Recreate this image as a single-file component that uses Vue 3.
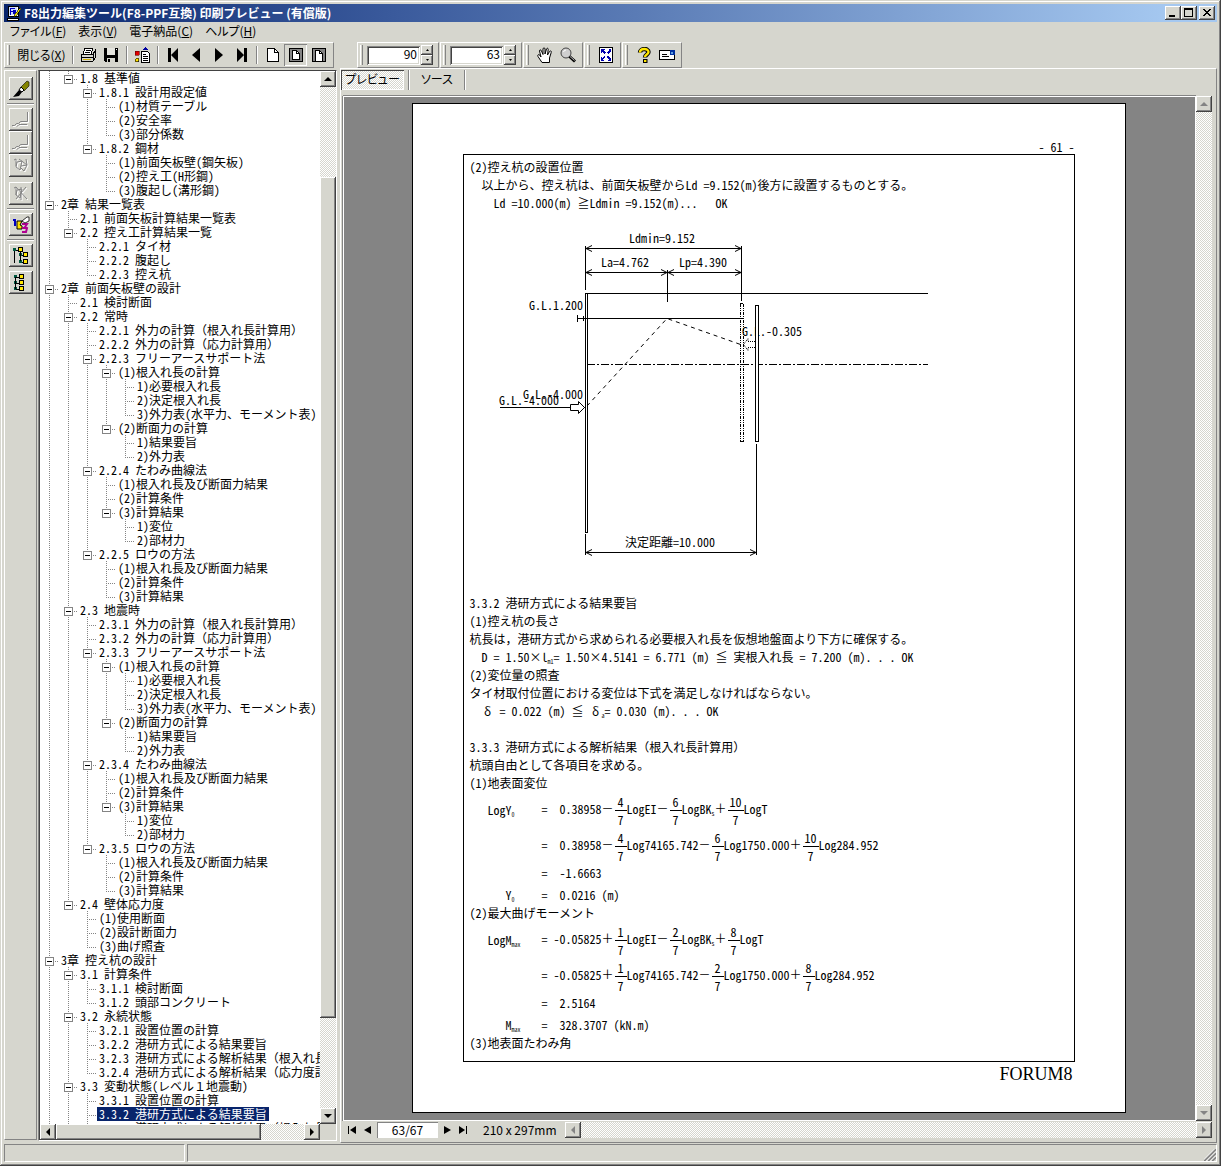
<script setup>
import { ref } from 'vue'

const menus = [
  ['ファイル', 'F'],
  ['表示', 'V'],
  ['電子納品', 'C'],
  ['ヘルプ', 'H'],
]

// Outline entries: [depth, label, expandable]
const outline = [
  [1, '1.8 基準値', 1],
  [2, '1.8.1 設計用設定値', 1],
  [3, '(1)材質テーブル'],
  [3, '(2)安全率'],
  [3, '(3)部分係数'],
  [2, '1.8.2 鋼材', 1],
  [3, '(1)前面矢板壁(鋼矢板)'],
  [3, '(2)控え工(H形鋼)'],
  [3, '(3)腹起し(溝形鋼)'],
  [0, '2章 結果一覧表', 1],
  [1, '2.1 前面矢板計算結果一覧表'],
  [1, '2.2 控え工計算結果一覧', 1],
  [2, '2.2.1 タイ材'],
  [2, '2.2.2 腹起し'],
  [2, '2.2.3 控え杭'],
  [0, '2章 前面矢板壁の設計', 1],
  [1, '2.1 検討断面'],
  [1, '2.2 常時', 1],
  [2, '2.2.1 外力の計算（根入れ長計算用）'],
  [2, '2.2.2 外力の計算（応力計算用）'],
  [2, '2.2.3 フリーアースサポート法', 1],
  [3, '(1)根入れ長の計算', 1],
  [4, '1)必要根入れ長'],
  [4, '2)決定根入れ長'],
  [4, '3)外力表(水平力、モーメント表)'],
  [3, '(2)断面力の計算', 1],
  [4, '1)結果要旨'],
  [4, '2)外力表'],
  [2, '2.2.4 たわみ曲線法', 1],
  [3, '(1)根入れ長及び断面力結果'],
  [3, '(2)計算条件'],
  [3, '(3)計算結果', 1],
  [4, '1)変位'],
  [4, '2)部材力'],
  [2, '2.2.5 ロウの方法', 1],
  [3, '(1)根入れ長及び断面力結果'],
  [3, '(2)計算条件'],
  [3, '(3)計算結果'],
  [1, '2.3 地震時', 1],
  [2, '2.3.1 外力の計算（根入れ長計算用）'],
  [2, '2.3.2 外力の計算（応力計算用）'],
  [2, '2.3.3 フリーアースサポート法', 1],
  [3, '(1)根入れ長の計算', 1],
  [4, '1)必要根入れ長'],
  [4, '2)決定根入れ長'],
  [4, '3)外力表(水平力、モーメント表)'],
  [3, '(2)断面力の計算', 1],
  [4, '1)結果要旨'],
  [4, '2)外力表'],
  [2, '2.3.4 たわみ曲線法', 1],
  [3, '(1)根入れ長及び断面力結果'],
  [3, '(2)計算条件'],
  [3, '(3)計算結果', 1],
  [4, '1)変位'],
  [4, '2)部材力'],
  [2, '2.3.5 ロウの方法', 1],
  [3, '(1)根入れ長及び断面力結果'],
  [3, '(2)計算条件'],
  [3, '(3)計算結果'],
  [1, '2.4 壁体応力度', 1],
  [2, '(1)使用断面'],
  [2, '(2)設計断面力'],
  [2, '(3)曲げ照査'],
  [0, '3章 控え杭の設計', 1],
  [1, '3.1 計算条件', 1],
  [2, '3.1.1 検討断面'],
  [2, '3.1.2 頭部コンクリート'],
  [1, '3.2 永続状態', 1],
  [2, '3.2.1 設置位置の計算'],
  [2, '3.2.2 港研方式による結果要旨'],
  [2, '3.2.3 港研方式による解析結果（根入れ長計算用）'],
  [2, '3.2.4 港研方式による解析結果（応力度計算用）'],
  [1, '3.3 変動状態(レベル１地震動)', 1],
  [2, '3.3.1 設置位置の計算'],
  [2, '3.3.2 港研方式による結果要旨'],
  [2, '3.3.3 港研方式による解析結果（根入れ長計算用）'],
]

// The branch line of a level runs on until a shallower entry closes it.
function continues(index, level) {
  for (let i = index + 1; i < outline.length; i++) {
    if (outline[i][0] === level) return true
    if (outline[i][0] < level) return false
  }
  return true
}

// Markup: {4/7} is a fraction, _ab; a subscript; full-width signs keep a whole cell.
const FULL = '×δ－＋≦≧（），１'
function parse(text) {
  return text
    .split(/(_\w+;|\{\d+\/\d+\}|[×δ－＋≦≧（），１])/)
    .filter(Boolean)
    .map((t) => {
      if (t[0] === '_') return { kind: 'sub', text: t.slice(1, -1) }
      if (t[0] === '{') {
        const [top, bottom] = t.slice(1, -1).split('/')
        return { kind: 'frac', top, bottom, wide: top.length > 1 }
      }
      if (FULL.includes(t)) return { kind: 'full', text: t }
      return { kind: 'text', text: t }
    })
}

const rows = outline.map(([depth, label, branch], i) => ({
  parts: parse(label),
  branch,
  guides: Array.from({ length: depth }, (_, level) => continues(i, level)),
  more: continues(i, depth),
}))

const selected = ref(74)
const zoom = ref('90')
const page = ref('63')
const pageLabel = ref('63/67')

const intro = [
  { text: '(2)控え杭の設置位置' },
  { text: '以上から、控え杭は、前面矢板壁からLd =9.152(m)後方に設置するものとする。', cls: 'in1' },
  { text: 'Ld =10.000(m) ≧Ldmin =9.152(m)...   OK', cls: 'in2' },
].map((l) => ({ ...l, parts: parse(l.text) }))

const body = [
  { text: '3.3.2 港研方式による結果要旨' },
  { text: '(1)控え杭の長さ' },
  { text: '杭長は，港研方式から求められる必要根入れ長を仮想地盤面より下方に確保する。' },
  { text: 'D = 1.50×l_m1;= 1.50×4.5141 = 6.771 (m) ≦ 実根入れ長 = 7.200 (m). . . OK', cls: 'in1' },
  { text: '(2)変位量の照査' },
  { text: 'タイ材取付位置における変位は下式を満足しなければならない。' },
  { text: 'δ = 0.022 (m) ≦ δ_a;= 0.030 (m). . . OK', cls: 'in1' },
  { text: '' },
  { text: '3.3.3 港研方式による解析結果（根入れ長計算用）' },
  { text: '杭頭自由として各項目を求める。' },
  { text: '(1)地表面変位' },
  { lhs: 'LogY_0;', text: '=  0.38958－{4/7}LogEI－{6/7}LogBK_s;＋{10/7}LogT', cls: 'tall' },
  { lhs: '', text: '=  0.38958－{4/7}Log74165.742－{6/7}Log1750.000＋{10/7}Log284.952', cls: 'tall' },
  { lhs: '', text: '=  -1.6663' },
  { lhs: 'Y_0;', text: '=  0.0216 (m)', cls: 'result' },
  { text: '(2)最大曲げモーメント' },
  { lhs: 'LogM_max;', text: '= -0.05825＋{1/7}LogEI－{2/7}LogBK_s;＋{8/7}LogT', cls: 'tall' },
  { lhs: '', text: '= -0.05825＋{1/7}Log74165.742－{2/7}Log1750.000＋{8/7}Log284.952', cls: 'tall' },
  { lhs: '', text: '=  2.5164' },
  { lhs: 'M_max;', text: '=  328.3707 (kN.m)', cls: 'result' },
  { text: '(3)地表面たわみ角' },
].map((l) => ({ ...l, parts: parse(l.text), left: l.lhs === undefined ? null : parse(l.lhs) }))
</script>

<template>
  <div class="window">
    <header class="titlebar">
      <svg class="ico" viewBox="0 0 16 16" shape-rendering="crispEdges" aria-hidden="true">
        <path d="M2 1h10v10H2z" fill="#fff" stroke="#000" />
        <path d="M3 2h8v8H3z" fill="#cfe0ff" />
        <path d="M4 3h5v1H5v2h3v1H5v3H4zM7 5h3v4H7z" fill="#0000c0" />
        <path d="M1 13h11v2H1z" fill="#fff" stroke="#000" />
        <path d="M14 3l1 1-5 7-2 1 1-3z" fill="#f0e000" stroke="#000" stroke-width=".6" />
      </svg>
      <h1>F8出力編集ツール(F8-PPF互換) 印刷プレビュー (有償版)</h1>
      <div class="caption">
        <button class="btn3d cap" aria-label="最小化">
          <svg viewBox="0 0 12 10" shape-rendering="crispEdges"><path d="M2 7h6v2H2z" /></svg>
        </button>
        <button class="btn3d cap" aria-label="最大化">
          <svg viewBox="0 0 12 10" shape-rendering="crispEdges"><path d="M1 0h9v9H1zM2 2v6h7V2z" fill-rule="evenodd" /></svg>
        </button>
        <button class="btn3d cap close" aria-label="閉じる">
          <svg viewBox="0 0 12 10" shape-rendering="crispEdges"><path d="M2 1h2v1h1v1h2V2h1V1h2v1H9v1H8v1H7v1h1v1h1v1h1v1H8V7H7V6H5v1H4v1H2V7h1V6h1V5h1V4H4V3H3V2H2z" /></svg>
        </button>
      </div>
    </header>

    <nav class="menubar">
      <button v-for="m in menus" :key="m[1]" class="flat">{{ m[0] }}(<u>{{ m[1] }}</u>)</button>
    </nav>

    <div class="toolbars">
      <div class="band main-band">
        <i class="grip"></i>
        <button class="flat closer">閉じる(<u>X</u>)</button>
        <i class="vsep"></i>
        <button class="flat tool" aria-label="印刷">
          <svg viewBox="0 0 16 16" shape-rendering="crispEdges">
            <path d="M5 1h8l-2 6H3z" fill="#fff" stroke="#000" />
            <path d="M6 3h5M5 5h5" stroke="#000" />
            <path d="M1 7h12l2-3v7l-2 3H1z" fill="#d6d6ce" stroke="#000" />
            <path d="M1 10h12M13 7v7" stroke="#000" />
            <path d="M3 12h8" stroke="#d0b000" />
          </svg>
        </button>
        <button class="flat tool" aria-label="保存">
          <svg viewBox="0 0 16 16" shape-rendering="crispEdges">
            <path d="M1 1h14v14H2l-1-1z" />
            <path d="M4 1h8v7H4z" fill="#e4e4de" />
            <path d="M4 11h8v4H4z" fill="#d6d6ce" /><path d="M5 12h2v3H5z" />
            <path d="M13 2h1v1h-1z" fill="#fff" />
          </svg>
        </button>
        <i class="vsep"></i>
        <button class="flat tool" aria-label="出力">
          <svg viewBox="0 0 16 16" shape-rendering="crispEdges">
            <path d="M1 4h4v4H1z" fill="#e00000" stroke="#600" stroke-width=".6" />
            <circle cx="3" cy="13" r="2" fill="#ffe000" stroke="#000" stroke-width=".6" />
            <path d="M8 3l3-3 3 3z" fill="#0000a0" />
            <path d="M7.500 4.500h6l2 2v9h-8z" fill="#fff" stroke="#000" />
            <path d="M9 7h3M9 9h5M9 11h5M9 13h5" stroke="#000" />
          </svg>
        </button>
        <i class="vsep"></i>
        <button class="flat tool" aria-label="先頭ページ"><svg viewBox="0 0 16 16"><path d="M3 1h3v14H3zM13 1v14L6 8z" /></svg></button>
        <button class="flat tool" aria-label="前のページ"><svg viewBox="0 0 16 16"><path d="M12 1v14L4 8z" /></svg></button>
        <button class="flat tool" aria-label="次のページ"><svg viewBox="0 0 16 16"><path d="M4 1v14l8-7z" /></svg></button>
        <button class="flat tool" aria-label="最終ページ"><svg viewBox="0 0 16 16"><path d="M10 1h3v14h-3zM3 1v14l7-7z" /></svg></button>
        <i class="vsep"></i>
        <button class="flat tool" aria-label="全体表示">
          <svg viewBox="0 0 16 16" shape-rendering="crispEdges"><path d="M2.500 1.500h7l4 4v9h-11z" fill="#fff" stroke="#000" /><path d="M9.500 1.500v4h4" fill="none" stroke="#000" /></svg>
        </button>
        <button class="flat tool pressed" aria-label="ページ幅表示">
          <svg viewBox="0 0 16 16" shape-rendering="crispEdges"><path d="M1.500 1.500h13v13h-13z" fill="#848484" stroke="#000" /><path d="M4.500 3.500h4l3 3v6h-7z" fill="#fff" stroke="#000" /><path d="M8.500 3.500v3h3" fill="none" stroke="#000" /></svg>
        </button>
        <button class="flat tool" aria-label="文字幅表示">
          <svg viewBox="0 0 16 16" shape-rendering="crispEdges"><path d="M1.500 1.500h13v13h-13z" fill="#848484" stroke="#000" /><path d="M4.500 3.500h4l3 3v8h-7z" fill="#fff" stroke="#000" /><path d="M8.500 3.500v3h3" fill="none" stroke="#000" /></svg>
        </button>
      </div>

      <div class="band">
        <i class="grip"></i>
        <input v-model="zoom" class="num" aria-label="倍率" />
        <span class="spin">
          <button class="btn3d" aria-label="倍率を上げる"><svg viewBox="0 0 5 3"><path d="M1 2h3L2.500 0z" /></svg></button>
          <button class="btn3d" aria-label="倍率を下げる"><svg viewBox="0 0 5 3"><path d="M1 0h3L2.500 2z" /></svg></button>
        </span>
      </div>
      <div class="band">
        <i class="grip"></i>
        <input v-model="page" class="num" aria-label="ページ" />
        <span class="spin">
          <button class="btn3d" aria-label="ページを進める"><svg viewBox="0 0 5 3"><path d="M1 2h3L2.500 0z" /></svg></button>
          <button class="btn3d" aria-label="ページを戻す"><svg viewBox="0 0 5 3"><path d="M1 0h3L2.500 2z" /></svg></button>
        </span>
      </div>
      <div class="band">
        <i class="grip"></i>
        <button class="flat tool" aria-label="移動">
          <svg viewBox="0 0 16 16"><path d="M5 15.500L1 9.500c-1-2 1-2.500 2-1L4 10 2.500 4c0-1.500 1.500-1.500 2 0L6 7.500V2c0-1.500 2-1.500 2 0v5l1.500-5c.5-1.300 2-.8 1.700.5L10.500 8l2-3.500c.8-1.200 2.200-.5 1.700 1L12.500 11v4.500z" fill="#fff" stroke="#000" /></svg>
        </button>
        <button class="flat tool" aria-label="拡大">
          <svg viewBox="0 0 16 16"><circle cx="6" cy="6" r="5" fill="#cfcfcf" stroke="#444" /><path d="M3.500 5Q4 3 6 3" stroke="#fff" fill="none" /><path d="M9.500 9.500l5.500 5" stroke="#000" stroke-width="3" /><path d="M10 9.500l4.500 4" stroke="#bbb" /></svg>
        </button>
      </div>
      <div class="band">
        <i class="grip"></i>
        <button class="flat tool" aria-label="全画面">
          <svg viewBox="0 0 16 16" shape-rendering="crispEdges"><path d="M1.500.5h13v15h-13z" fill="#fff" stroke="#000" /><path d="M3 2h4L5.500 3.500 8 6 6 7 4 5 3 6zM13 2v4l-1-1-2 2-1-1 2-3-1-1zM3 14v-4l1 1 2-2 1 1-2 3 2 1zM13 14H9l1.500-1.500L8 10l2-1 2 2 1-1z" fill="#0000b0" /></svg>
        </button>
      </div>
      <div class="band">
        <i class="grip"></i>
        <button class="flat tool" aria-label="ヘルプ">
          <svg viewBox="0 0 16 16"><path d="M4 5.500C4 1 12.500 1 12.500 5c0 2.500-3.500 2.500-3.500 5.500" fill="none" stroke="#000" stroke-width="4.400" /><path d="M7 12h4.500v4H7z" /><path d="M4 5.500C4 1 12.500 1 12.500 5c0 2.500-3.500 2.500-3.500 5" fill="none" stroke="#ffe600" stroke-width="2.400" /><path d="M8 13h2.400v2H8z" fill="#ffe600" /></svg>
        </button>
        <button class="flat tool" aria-label="メール">
          <svg viewBox="0 0 16 16" shape-rendering="crispEdges"><path d="M.5 3.500h15v9H.5z" fill="#fff" stroke="#000" /><path d="M3 7h5M3 9h7" stroke="#000" /><path d="M11 3h5v5h-5z" fill="#0030a0" /><path d="M12 5h2v2h-2z" fill="#60a0e0" /></svg>
        </button>
      </div>
    </div>

    <main class="work">
      <aside class="side">
        <button class="btn3d sbtn" aria-label="書式">
          <svg viewBox="0 0 18 18"><path d="M9 7l6-6 2 1v4l-5 5z" fill="#848400" stroke="#000" stroke-width=".6" /><path d="M9 7l3 3-2 2-3-2z" fill="#fff" stroke="#000" /><path d="M7 10l3 2-3 4-6 1z" /></svg>
        </button>
        <i class="hsep"></i>
        <button class="btn3d sbtn" disabled aria-label="前へ">
          <svg viewBox="0 0 18 18" fill="none"><path d="M16.500 1V11.500H9.500L7.500 13.500H5.500L3.500 15.500H1M16 14.500H8L6 16.500" stroke="#fff" /><path d="M15.500 1V10.500H8.500L6.500 12.500H4.500L2.500 14.500H0M15 13.500H7L5 15.500" stroke="#848484" /></svg>
        </button>
        <button class="btn3d sbtn" disabled aria-label="次へ">
          <svg viewBox="0 0 18 18" fill="none"><path d="M16.500 1V11.500H9.500L7.500 13.500H5.500L3.500 15.500H1M16 14.500H8L6 16.500" stroke="#fff" /><path d="M15.500 1V10.500H8.500L6.500 12.500H4.500L2.500 14.500H0M15 13.500H7L5 15.500" stroke="#848484" /></svg>
        </button>
        <button class="btn3d sbtn" disabled aria-label="番号の更新">
          <svg viewBox="0 0 18 18" fill="none"><path d="M3 4l2-1v7M6 6l5-1-2 9-4-3zM8 3l8 6-3 6-4-4M15 3l1 6-6 1" stroke="#fff" /><path d="M2 3l2-1v7M5 5l5-1-2 9-4-3zM7 2l8 6-3 6-4-4M14 2l1 6-6 1" stroke="#848484" /></svg>
        </button>
        <button class="btn3d sbtn apart" disabled aria-label="番号の削除">
          <svg viewBox="0 0 18 18" fill="none"><path d="M3 4l2-1v8M6 6l5-1-2 9-4-3zM15 3L5 15M5 3l11 12M10 3v13" stroke="#fff" /><path d="M2 3l2-1v8M5 5l5-1-2 9-4-3zM14 2L4 14M4 2l11 12M9 2v13" stroke="#848484" /></svg>
        </button>
        <i class="hsep"></i>
        <button class="btn3d sbtn" aria-label="番号付け">
          <svg viewBox="0 0 18 18"><path d="M1 3h3v7H2V5H1z" fill="#0000c0" /><path d="M5 5h5l-2 4 2 1v3H5z" fill="#ffe000" stroke="#000" /><path d="M10 8h5l-2 3 2 1-1 4h-4M10 12h3" fill="none" stroke="#b00090" stroke-width="2" /><path d="M10 5l5-4h2v4l-4 2z" fill="#fff" stroke="#000" stroke-width=".8" /></svg>
        </button>
        <i class="hsep"></i>
        <button class="btn3d sbtn" aria-label="ツリー展開">
          <svg viewBox="0 0 18 18" shape-rendering="crispEdges"><path d="M1 1h3v3H1zM7 6h3v3H7zM7 13h3v3H7z" fill="#005840" /><path d="M2 4v12M4 3h3M8 3v11M10 8h2M10 15h2" stroke="#000" fill="none" /><path d="M6.500.5h4v4h-4zM11.500 5.500h4v4h-4zM11.500 12.500h4v4h-4z" fill="#ffe600" stroke="#000" /></svg>
        </button>
        <button class="btn3d sbtn apart2" aria-label="ツリー縮小">
          <svg viewBox="0 0 18 18" shape-rendering="crispEdges"><path d="M2 1h3v3H2zM2 7h3v3H2zM2 13h3v3H2z" fill="#005840" /><path d="M3 3v12M4 3h3M4 9h3M4 15h3" stroke="#000" fill="none" /><path d="M7.500.5h4v4h-4zM7.500 6.500h4v4h-4zM7.500 12.500h4v4h-4z" fill="#ffe600" stroke="#000" /></svg>
        </button>
      </aside>

      <section class="tree">
        <ul class="rows" role="tree">
          <li
            v-for="(r, i) in rows"
            :key="i"
            class="row"
            role="treeitem"
            :aria-selected="i === selected"
            @click="selected = i"
          >
            <i v-for="(g, k) in r.guides" :key="k" class="cell" :class="{ through: g }"></i>
            <i class="cell node" :class="{ more: r.more }"><b v-if="r.branch" class="box"></b></i>
            <span class="label" :class="{ on: i === selected }"
              ><template v-for="(p, k) in r.parts" :key="k"
                ><span v-if="p.kind === 'full'" class="full">{{ p.text }}</span
                ><template v-else>{{ p.text }}</template></template
              ></span
            >
          </li>
        </ul>
        <div class="sb v">
          <button class="btn3d arrow" aria-label="上へ"><svg viewBox="0 0 8 8"><path d="M0 6h8L4 2z" /></svg></button>
          <div class="track tree-v"><i class="btn3d thumb"></i></div>
          <button class="btn3d arrow" aria-label="下へ"><svg viewBox="0 0 8 8"><path d="M0 2h8L4 6z" /></svg></button>
        </div>
        <div class="sb h">
          <button class="btn3d arrow" aria-label="左へ"><svg viewBox="0 0 8 8"><path d="M6 0v8L2 4z" /></svg></button>
          <div class="track tree-h"><i class="btn3d thumb"></i></div>
          <button class="btn3d arrow" aria-label="右へ"><svg viewBox="0 0 8 8"><path d="M2 0v8l4-4z" /></svg></button>
        </div>
      </section>

      <section class="viewer">
        <div class="tabs">
          <button class="flat tab on">プレビュー</button>
          <i class="vsep"></i>
          <button class="flat tab">ソース</button>
          <i class="vsep"></i>
        </div>

        <div class="stage">
          <div class="desk">
            <article class="paper">
              <div class="pageno">- 61 -</div>
              <div class="frame">
                <p v-for="(l, i) in intro" :key="'i' + i" class="line" :class="l.cls">
                  <span
                    ><template v-for="(p, k) in l.parts" :key="k"
                      ><span v-if="p.kind === 'full'" class="full">{{ p.text }}</span
                      ><template v-else>{{ p.text }}</template></template
                    ></span
                  >
                </p>

                <svg class="figure" width="600" height="382" viewBox="470 212 600 382" fill="none" stroke="#000">
                  <g shape-rendering="crispEdges">
                    <path d="M585.500 246V290M741.500 246V301M667.500 270V302M586 248.500H741M586 272.500H741" />
                    <path d="M585 293.500H928M585.500 293V532.500H587.500V293M577 318.500H744M577.500 315V322M583.500 316V321" />
                    <path d="M587 364.500H928" stroke-dasharray="8 2 2 2" />
                    <path d="M740.500 304V441.500M743.500 304V441.500M740 441.500H744M740 303.500H744" stroke-dasharray="3 1 1 1 1 1" />
                    <path d="M500 407.500H585M585.500 534V555M756.500 444V555M586 552.500H756" />
                  </g>
                  <path d="M592 245.500L586 248.500L592 251.500M735 245.500L741 248.500L735 251.500M592 269.500L586 272.500L592 275.500M661 269.500L667 272.500L661 275.500M674 269.500L668 272.500L674 275.500M735 269.500L741 272.500L735 275.500M592 549.500L586 552.500L592 555.500M750 549.500L756 552.500L750 555.500" />
                  <path d="M587 406L667 318.500L742 345" stroke-dasharray="4 4" />
                  <path d="M570.500 404.500H578.500V401.500L584.500 407.500L578.500 413.500V410.500H570.500Z" fill="#fff" />
                  <path d="M755 341.500H748V338.500L743.500 344.500L748 350.500V347.500H755" stroke-dasharray="1 1" />
                  <g class="figtext" stroke="none" fill="#000">
                    <text x="629" y="243">Ldmin=9.152</text>
                    <text x="601" y="267">La=4.762</text>
                    <text x="679" y="267">Lp=4.390</text>
                    <text x="529" y="310">G.L.1.200</text>
                    <text x="742" y="336">G.L.-0.305</text>
                    <text x="523" y="399">G.L.-4.000</text>
                    <text x="499" y="405">G.L.-4.000</text>
                    <text x="625" y="547">決定距離=10.000</text>
                  </g>
                  <path d="M755.500 305.500H758.500V441.500H755.500Z" fill="#fff" shape-rendering="crispEdges" />
                </svg>

                <p v-for="(l, i) in body" :key="'b' + i" class="line" :class="l.cls">
                  <span v-if="l.left" class="lhs"
                    ><template v-for="(p, k) in l.left" :key="k"
                      ><sub v-if="p.kind === 'sub'">{{ p.text }}</sub
                      ><template v-else>{{ p.text }}</template></template
                    ></span
                  ><span class="rhs"
                    ><template v-for="(p, k) in l.parts" :key="k"
                      ><span v-if="p.kind === 'full'" class="full">{{ p.text }}</span
                      ><sub v-else-if="p.kind === 'sub'">{{ p.text }}</sub
                      ><span v-else-if="p.kind === 'frac'" class="frac" :class="{ wide: p.wide }"
                        ><span>{{ p.top }}</span
                        ><span>{{ p.bottom }}</span></span
                      ><template v-else>{{ p.text }}</template></template
                    ></span
                  >
                </p>
              </div>
              <div class="brand">FORUM8</div>
            </article>
          </div>
          <div class="sb v off">
            <button class="btn3d arrow" disabled aria-label="上へ"><svg viewBox="0 0 8 8"><path d="M0 6h8L4 2z" /></svg></button>
            <div class="track"></div>
            <button class="btn3d arrow" disabled aria-label="下へ"><svg viewBox="0 0 8 8"><path d="M0 2h8L4 6z" /></svg></button>
          </div>
        </div>

        <div class="pager">
          <button class="flat pg" aria-label="先頭"><svg viewBox="0 0 8 8"><path d="M0 0h1v8H0zM8 0v8L2 4z" /></svg></button>
          <button class="flat pg" aria-label="前"><svg viewBox="0 0 8 8"><path d="M7 0v8L0 4z" /></svg></button>
          <input v-model="pageLabel" class="pos" aria-label="ページ位置" />
          <button class="flat pg" aria-label="次"><svg viewBox="0 0 8 8"><path d="M1 0v8l7-4z" /></svg></button>
          <button class="flat pg" aria-label="最終"><svg viewBox="0 0 8 8"><path d="M7 0h1v8H7zM0 0v8l6-4z" /></svg></button>
          <span class="size">210 x 297mm</span>
          <div class="sb h off">
            <button class="btn3d arrow" disabled aria-label="左へ"><svg viewBox="0 0 8 8"><path d="M6 0v8L2 4z" /></svg></button>
            <div class="track"></div>
            <button class="btn3d arrow" disabled aria-label="右へ"><svg viewBox="0 0 8 8"><path d="M2 0v8l4-4z" /></svg></button>
          </div>
        </div>
      </section>
    </main>

    <footer class="status">
      <div class="panel first"></div>
      <div class="panel">
        <svg viewBox="0 0 12 12" fill="none" aria-hidden="true">
          <path d="M0 12L12 0M4 12L12 4M8 12L12 8" stroke="#848484" stroke-width="2" />
          <path d="M-1.500 12L12-1.500M2.500 12L12 2.500M6.500 12L12 6.500" stroke="#fff" />
        </svg>
      </div>
    </footer>
  </div>
</template>

<style>
body {
  margin: 0;
  background: #d6d6ce;
}
</style>

<style scoped>
.window {
  --face: #d6d6ce;
  --shade: #848484;
  --dark: #424242;
  box-sizing: border-box;
  height: 100vh;
  display: flex;
  flex-direction: column;
  padding: 4px;
  overflow: hidden;
  background: var(--face);
  box-shadow: inset -1px -1px var(--dark), inset 1px 1px var(--face), inset -2px -2px var(--shade), inset 2px 2px #fff;
  font-family: "Noto Sans CJK JP", sans-serif;
  font-feature-settings: "palt";
  font-size: 12px;
  line-height: 14px;
  color: #000;
}
button,
input {
  font: inherit;
  font-feature-settings: inherit;
  color: inherit;
  padding: 0;
  margin: 0;
  border: 0;
  border-radius: 0;
  box-sizing: border-box;
}
svg {
  display: block;
}
.flat {
  background: none;
  white-space: nowrap;
}
.btn3d {
  display: flex;
  align-items: center;
  justify-content: center;
  background: var(--face);
  box-shadow: inset -1px -1px var(--dark), inset 1px 1px #fff, inset -2px -2px var(--shade);
}

/* title bar */
.titlebar {
  flex: none;
  display: flex;
  align-items: center;
  height: 18px;
  padding: 0 2px;
  background: linear-gradient(90deg, #08246b, #3a5a9c 32%, #5a7bb5 52%, #a5c8f0 96%);
  color: #fff;
}
.ico {
  width: 16px;
  height: 16px;
}
h1 {
  flex: 1;
  margin: 0 0 0 2px;
  font-size: 12px;
  line-height: 18px;
  font-weight: 700;
  font-feature-settings: normal;
  white-space: nowrap;
}
.caption {
  display: flex;
}
.cap {
  width: 16px;
  height: 14px;
}
.cap svg {
  width: 12px;
  height: 10px;
}
.close {
  margin-left: 2px;
}

/* menus */
.menubar {
  flex: none;
  display: flex;
  gap: 12px;
  height: 18px;
  padding-left: 6px;
}

/* tool bands */
.toolbars {
  flex: none;
  display: flex;
  height: 26px;
  gap: 1px;
  margin-top: 2px;
}
.band {
  display: flex;
  align-items: center;
  box-sizing: border-box;
  border: 1px solid;
  border-color: #fff var(--shade) var(--shade) #fff;
  padding: 0 3px 0 2px;
}
.main-band {
  width: 330px;
  margin-right: 22px;
}
.grip {
  width: 1px;
  height: 20px;
  margin-right: 4px;
  border-left: 1px solid #fff;
  border-right: 1px solid var(--shade);
}
.vsep {
  width: 0;
  height: 18px;
  margin: 0 3px;
  border-left: 1px solid var(--shade);
  border-right: 1px solid #fff;
}
.closer {
  width: 55px;
}
.tool {
  width: 23px;
  height: 22px;
  display: flex;
  align-items: center;
  justify-content: center;
}
.tool svg {
  width: 16px;
  height: 16px;
}
.pressed {
  box-shadow: inset 1px 1px var(--shade), inset -1px -1px #fff;
}
.num {
  width: 53px;
  height: 19px;
  text-align: right;
  background: #fff;
  padding: 0 3px 3px 0;
  box-shadow: inset 1px 1px var(--shade), inset -1px -1px #fff, inset 2px 2px var(--dark), inset -2px -2px var(--face);
}
.spin {
  display: flex;
  flex-direction: column;
  margin: 0 2px 0 1px;
}
.spin .btn3d {
  width: 12px;
  height: 10px;
}
.spin svg {
  width: 5px;
  height: 3px;
}

/* work area */
.work {
  flex: 1;
  min-height: 0;
  display: flex;
  gap: 1px;
}
.side {
  flex: none;
  width: 33px;
  box-sizing: border-box;
  padding-top: 6px;
  margin: 2px 0 3px;
  border: 1px solid;
  border-color: #fff var(--shade) var(--shade) #fff;
  display: flex;
  flex-direction: column;
  align-items: center;
}
.sbtn {
  flex: none;
  width: 24px;
  height: 23px;
}
.sbtn svg {
  flex: none;
  width: 18px;
  height: 18px;
}
.hsep {
  width: 27px;
  margin: 3px 0;
  border-top: 1px solid var(--shade);
  border-bottom: 1px solid #fff;
}
.apart {
  margin-top: 5px;
}
.apart2 {
  margin-top: 4px;
}

/* document outline */
.tree {
  flex: none;
  width: 299px;
  box-sizing: border-box;
  margin: 2px 0;
  display: grid;
  grid-template: minmax(0, 1fr) 16px / minmax(0, 1fr) 16px;
  background: var(--face);
  border: 1px solid;
  border-color: var(--dark) #fff #fff var(--shade);
  box-shadow: inset 1px 0 var(--dark);
  padding-left: 1px;
}
.rows {
  margin: 0;
  padding: 0;
  list-style: none;
  overflow: hidden;
  background: #fff;
  font-feature-settings: "hwid";
}
.row {
  display: flex;
  height: 14px;
}
.cell {
  flex: none;
  position: relative;
  width: 19px;
  height: 14px;
}
.through,
.more {
  background: repeating-linear-gradient(#848484 0 1px, transparent 1px 2px) 9px 0 / 1px 14px no-repeat;
}
.node::before {
  content: "";
  position: absolute;
  left: 9px;
  top: 0;
  width: 10px;
  height: 9px;
  background:
    repeating-linear-gradient(#848484 0 1px, transparent 1px 2px) 0 0 / 1px 9px no-repeat,
    repeating-linear-gradient(90deg, #848484 0 1px, transparent 1px 2px) 0 8px / 10px 1px no-repeat;
}
.box {
  position: absolute;
  left: 5px;
  top: 4px;
  width: 7px;
  height: 7px;
  border: 1px solid var(--shade);
  background: linear-gradient(#000, #000) center / 5px 1px no-repeat #fff;
}
.label {
  padding: 0 2px;
  line-height: 14px;
  white-space: pre;
}
.label.on {
  background: #08246b;
  color: #fff;
}

/* scroll bars */
.sb {
  display: flex;
}
.sb.v {
  width: 16px;
  flex-direction: column;
}
.sb.h {
  height: 16px;
}
.arrow {
  flex: none;
  width: 16px;
  height: 16px;
}
.arrow svg {
  width: 8px;
  height: 8px;
}
.off path {
  fill: #848484;
}
.track {
  flex: 1;
  display: grid;
  background: conic-gradient(#fff 25%, #d6d6ce 0 50%, #fff 0 75%, #d6d6ce 0) 0 0 / 2px 2px;
}
.tree-v {
  grid-template-rows: 90fr 841fr 90fr;
}
.tree-v .thumb {
  grid-row: 2;
}
.tree-h {
  grid-template-columns: 204fr 43fr;
}

/* preview */
.viewer {
  flex: 1;
  min-width: 0;
  display: flex;
  flex-direction: column;
  margin-left: 2px;
  border: 1px solid;
  border-color: #fff var(--shade) var(--shade) #fff;
  padding: 0 4px 4px 0;
}
.tabs {
  display: flex;
  align-items: flex-start;
  box-sizing: border-box;
  height: 27px;
  padding-top: 1px;
}
.tabs .vsep {
  margin: 0 4px;
  height: 20px;
}
.tab {
  width: 46px;
  height: 20px;
  padding-bottom: 3px;
}
.tab.on {
  width: 63px;
  background: conic-gradient(#fff 25%, #d6d6ce 0 50%, #fff 0 75%, #d6d6ce 0) 0 0 / 2px 2px;
  box-shadow: inset 1px 1px var(--dark), inset -1px -1px #fff;
}
.stage {
  flex: 1;
  min-height: 0;
  display: flex;
  margin-left: 2px;
}
.desk {
  flex: 1;
  overflow: hidden;
  box-sizing: border-box;
  padding: 6px 2px 0 0;
  background: #848484;
  border: 1px solid #fff;
  box-shadow: 0 -1px var(--shade), -1px 0 var(--shade);
}
.paper {
  box-sizing: border-box;
  width: 714px;
  min-height: 1010px;
  margin: 0 auto;
  padding: 34px 50px 0;
  background: #fff;
  border: 1px solid #000;
  font-feature-settings: "hwid";
}
.pageno {
  height: 16px;
  text-align: right;
  line-height: 18px;
  white-space: pre;
}
.frame {
  box-sizing: border-box;
  min-height: 908px;
  border: 1px solid #000;
  padding: 3px 6px 0;
}
.line {
  display: flex;
  align-items: center;
  margin: 0;
  height: 18px;
  line-height: 18px;
  white-space: pre;
}
.in1 {
  padding-left: 12px;
}
.in2 {
  padding-left: 24px;
}
.lhs {
  box-sizing: border-box;
  width: 72px;
  padding-left: 18px;
}
.tall {
  height: 36px;
}
.result {
  padding-top: 4px;
}
.result .lhs {
  padding-left: 36px;
}
.full {
  display: inline-block;
  width: 12px;
  text-align: center;
  font-feature-settings: normal;
}
sub {
  font-size: 6px;
  line-height: 0;
  vertical-align: -2px;
}
.frac {
  display: inline-flex;
  flex-direction: column;
  min-width: 12px;
  margin-left: 1px;
  vertical-align: middle;
  text-align: center;
  line-height: 17px;
}
.frac.wide {
  min-width: 16px;
}
.frac span + span {
  border-top: 1px solid #000;
}
.figtext {
  font-size: 12px;
}
.brand {
  font: 18px/24px "Liberation Serif", serif;
  text-align: right;
  padding-right: 2px;
}

/* page navigation */
.pager {
  display: flex;
  align-items: center;
  height: 16px;
  padding: 1px 0 0 3px;
}
.pg {
  width: 16px;
  height: 14px;
  display: flex;
  align-items: center;
  justify-content: center;
}
.pg svg {
  width: 8px;
  height: 8px;
}
.pos {
  width: 61px;
  height: 16px;
  margin: 0 1px;
  padding-bottom: 2px;
  text-align: center;
  background: #fff;
  box-shadow: inset 1px 1px var(--shade);
}
.size {
  width: 94px;
  padding-left: 12px;
  box-sizing: border-box;
  white-space: nowrap;
}
.pager .sb {
  flex: 1;
}

/* status bar */
.status {
  flex: none;
  display: flex;
  gap: 2px;
  height: 18px;
  padding-top: 1px;
}
.panel {
  flex: 1;
  display: flex;
  align-items: flex-end;
  justify-content: flex-end;
  border: 1px solid;
  border-color: var(--shade) #fff #fff var(--shade);
}
.first {
  flex: 0 0 179px;
}
.panel svg {
  width: 12px;
  height: 12px;
}
</style>
